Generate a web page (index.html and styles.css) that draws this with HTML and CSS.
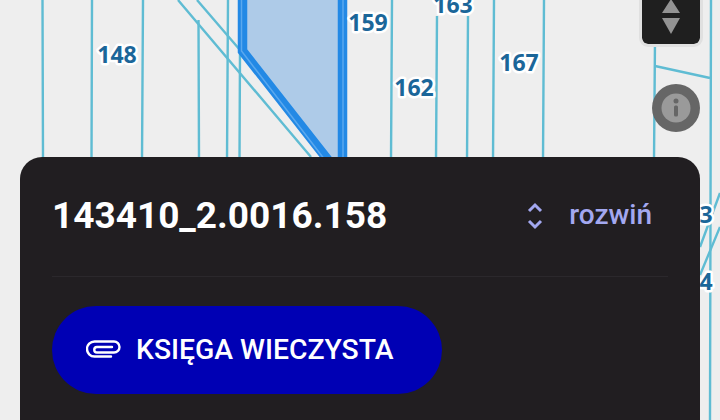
FILE: index.html
```html
<!DOCTYPE html>
<html lang="pl">
<head>
<meta charset="utf-8">
<title>Działka 143410_2.0016.158</title>
<link rel="stylesheet" href="styles.css">
</head>
<body>
<main class="screen">
  <svg class="map" width="720" height="420" viewBox="0 0 720 420" aria-label="Mapa działek">
    <g class="parcel-lines">
      <path d="M42.500 0 43 160M92 0 91.500 160M143 0 142 160M198.500 20 199 160M228 0 227 160M240 50 239.500 160"/>
      <path d="M178 0 311 157M197 0 240 50"/>
      <path d="M392 0 391 160M437 16 436 160M468 16 467 160M494 0 493 160M544 0 543 160M655 40 654 160M711 0 710 420"/>
      <path d="M655 66 710 78"/>
      <path d="M720 193 700 247M720 227 700 275"/>
    </g>
    <polygon class="parcel-fill" points="242,-5 343,-5 343,160 328,160 242,51"/>
    <path class="parcel-edge" d="M242.500 -5V51L328 160M342.500 -5V160"/>
    <path class="parcel-edge-inner" d="M241.500 -5V51L325 160M343 -5V160"/>
    <g class="labels">
      <text x="117" y="63">148</text>
      <text x="368" y="31">159</text>
      <text x="453" y="13">163</text>
      <text x="414" y="96">162</text>
      <text x="519" y="71">167</text>
      <text x="706" y="223">3</text>
      <text x="706" y="290">4</text>
    </g>
  </svg>

  <div class="zoom-control">
    <svg width="20" height="36" viewBox="0 0 20 36"><path class="arrow" d="M10 0 19 14H1ZM1 19H19L10 35Z"/></svg>
  </div>

  <button class="info" aria-label="Informacje">
    <svg width="48" height="48" viewBox="0 0 48 48">
      <circle class="info-disc" cx="24" cy="24" r="14.500"/>
      <circle class="info-mark" cx="24" cy="17" r="2.500"/>
      <rect class="info-mark" x="22" y="21.500" width="4" height="11" rx="1.500"/>
    </svg>
  </button>

  <section class="panel">
    <header class="panel-head">
      <h1 class="parcel-id">143410_2.0016.158</h1>
      <div class="expand">
        <svg width="16" height="28" viewBox="0 0 16 28"><path class="chev" d="M2 9 8 3 14 9M2 19 8 25 14 19"/></svg>
        <span>rozwiń</span>
      </div>
    </header>
    <div class="divider"></div>
    <button class="kw-button">
      <svg width="36" height="18" viewBox="0 0 36 18"><path class="clip" d="M25 16.500H8.500A7.500 7.500 0 0 1 8.500 1.500H28A5.500 5.500 0 0 1 28 12.500H11A2.500 2.500 0 0 1 11 7H26"/></svg>
      <span>KSIĘGA WIECZYSTA</span>
    </button>
  </section>
</main>
</body>
</html>
```
FILE: styles.css
```css
* { box-sizing: border-box; }
html, body { margin: 0; height: 100%; }
body { background: #eeeeee; overflow: hidden; font-family: Roboto, sans-serif; }

.screen { position: relative; width: 720px; height: 420px; overflow: hidden; background: #eeeeee; }
.map { position: absolute; left: 0; top: 0; }

.parcel-lines path { fill: none; stroke: #5fbcd3; stroke-width: 2.400; }
.parcel-fill { fill: #aecbe8; }
.parcel-edge { fill: none; stroke: #2389e5; stroke-width: 9.500; }
.parcel-edge-inner { fill: none; stroke: #5aa8ee; stroke-width: 1.500; }

.labels text {
  font-family: "Open Sans", sans-serif;
  font-weight: 700;
  font-size: 23px;
  text-anchor: middle;
  fill: #1b6699;
  stroke: #ffffff;
  stroke-width: 5px;
  stroke-linejoin: round;
  paint-order: stroke;
}

.zoom-control {
  position: absolute; left: 639px; top: -6px;
  width: 64px; height: 53px;
  display: flex; justify-content: center; align-items: flex-end;
  padding-bottom: 9px;
  background: #1f1f1f;
  border: 3px solid #e0e0e0;
  border-radius: 0 0 9px 9px;
  background-clip: padding-box;
}
.arrow { fill: #939393; }

.info {
  position: absolute; left: 652px; top: 84px;
  width: 48px; height: 48px; padding: 0; border: 0;
  border-radius: 50%; background: #666666; display: flex;
}
.info-disc { fill: #9a9a9a; }
.info-mark { fill: #666666; }

.panel {
  position: absolute; left: 20px; top: 157px;
  width: 680px; height: 280px;
  padding: 0 32px;
  background: #211e21;
  border-radius: 22px 22px 0 0;
  display: flex; flex-direction: column; align-items: stretch;
}
.panel-head { height: 119px; padding: 0 16px 2px 0; display: flex; align-items: center; justify-content: space-between; }
.parcel-id { margin: 0; color: #ffffff; font-size: 37px; font-weight: 700; line-height: 1; }
.expand { display: flex; align-items: center; gap: 26px; color: #a3a8f0; font-size: 28px; font-weight: 500; }
.expand span { margin-bottom: 2px; }
.chev { fill: none; stroke: #a3a8f0; stroke-width: 3; }
.divider { height: 1px; background: #2b282c; }

.kw-button {
  margin-top: 29px;
  align-self: flex-start;
  width: 390px; height: 88px;
  padding: 0 0 2px 34px;
  border: 0; border-radius: 44px;
  background: #0000b4; color: #ffffff;
  display: flex; align-items: center; gap: 14px;
  font-family: Roboto, sans-serif; font-size: 28.300px; font-weight: 500;
}
.clip { fill: none; stroke: #ffffff; stroke-width: 2.400; stroke-linecap: round; }
```
